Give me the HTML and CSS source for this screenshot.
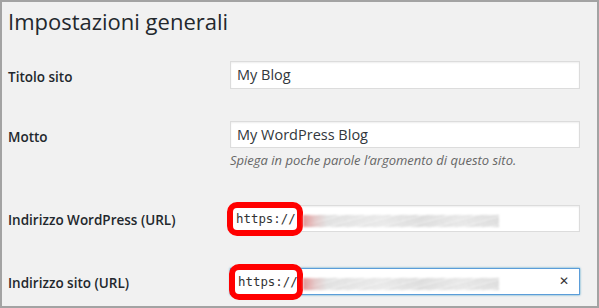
FILE: index.html
```html
<!DOCTYPE html>
<html lang="it">
<head>
<meta charset="utf-8">
<link rel="stylesheet" href="styles.css">
</head>
<body>
<div class="frame">
  <h1 class="title">Impostazioni generali</h1>
  <div class="form">
    <div class="row r1">
      <div class="label">Titolo sito</div>
      <div class="field">
        <div class="input">My Blog</div>
      </div>
    </div>
    <div class="row r2">
      <div class="label">Motto</div>
      <div class="field">
        <div class="input">My WordPress Blog</div>
        <p class="desc">Spiega in poche parole l’argomento di questo sito.</p>
      </div>
    </div>
    <div class="row r3">
      <div class="label">Indirizzo WordPress (URL)</div>
      <div class="field">
        <div class="input url">
          <span class="mark">https://</span>
          <span class="blur"></span>
        </div>
      </div>
    </div>
    <div class="row r4">
      <div class="label">Indirizzo sito (URL)</div>
      <div class="field">
        <div class="input url focus">
          <span class="mark">https://</span>
          <span class="blur"></span>
          <span class="clear">✕</span>
        </div>
        <p class="desc low">Inserisci qui l’indirizzo se vuoi che la home page del tuo sito</p>
      </div>
    </div>
  </div>
</div>
</body>
</html>
```

FILE: styles.css
```css
html, body {
  margin: 0;
  padding: 0;
}
body {
  font-family: "Open Sans", "Noto Sans", sans-serif;
  color: #23282d;
}
.frame {
  width: 599px;
  height: 308px;
  box-sizing: border-box;
  border: 2px solid #a3a3a3;
  background: #f1f1f1;
  overflow: hidden;
  padding: 0 0 0 6px;
}
.title {
  margin: 0;
  padding-top: 4px;
  font-size: 22px;
  font-weight: 400;
  line-height: 30px;
  color: #23282d;
}
.form {
  display: flex;
  flex-direction: column;
}
.row {
  display: grid;
  grid-template-columns: 222px 350px;
  align-items: start;
}
.label {
  font-size: 13.5px;
  font-weight: 600;
  line-height: 18px;
  padding-top: 7px;
}
.r1 { margin-top: 25px; }
.r2 { margin-top: 32px; }
.r3 { margin-top: 36px; }
.r4 { margin-top: 36px; }
.r3 .label, .r4 .label { padding-top: 6px; }
.input {
  position: relative;
  box-sizing: border-box;
  height: 27px;
  border: 1px solid #dcdcdc;
  box-shadow: inset 0 1px 2px rgba(0,0,0,.07);
  background: #fff;
  font-size: 14.5px;
  line-height: 25px;
  padding-left: 6px;
  color: #32373c;
}
.r1 .input { height: 28px; line-height: 26px; }
.input.focus {
  border-color: #5b9dd9;
  box-shadow: 0 0 2px rgba(30,140,190,.8);
}
.desc {
  margin: 3px 0 0;
  font-size: 13px;
  font-style: italic;
  line-height: 18px;
  color: #666;
}
.desc.low { margin-top: 9px; }
.mark {
  position: absolute;
  left: -4px;
  top: -4px;
  width: 76px;
  height: 34px;
  box-sizing: border-box;
  border: 6px solid #f00;
  border-radius: 10px;
  background: #fff;
  font-family: "DejaVu Sans Mono", "Liberation Mono", monospace;
  font-size: 12.4px;
  line-height: 22px;
  padding-left: 3px;
  color: #333;
}
.focus .mark { left: -2px; top: -5px; width: 74px; height: 36px; line-height: 24px; }
.blur {
  position: absolute;
  left: 72px;
  top: 9px;
  width: 196px;
  height: 12px;
  background:
    linear-gradient(90deg, rgba(228,120,120,.7) 0, rgba(235,160,160,.35) 12px, rgba(255,255,255,0) 24px),
    linear-gradient(90deg, rgba(255,255,255,0) 0, rgba(255,255,255,.35) 40%, rgba(255,255,255,0) 60%, rgba(255,255,255,.3) 80%, rgba(255,255,255,0) 100%),
    repeating-linear-gradient(345deg, #d8d8d8 0 2px, #ececec 2px 4px, #d2d2d2 4px 5px, #e4e4e4 5px 7px);
  filter: blur(1.2px);
}
.clear {
  position: absolute;
  right: 10px;
  top: 0;
  font-size: 12px;
  line-height: 25px;
  color: #333;
  font-family: "DejaVu Sans", sans-serif;
}
```
